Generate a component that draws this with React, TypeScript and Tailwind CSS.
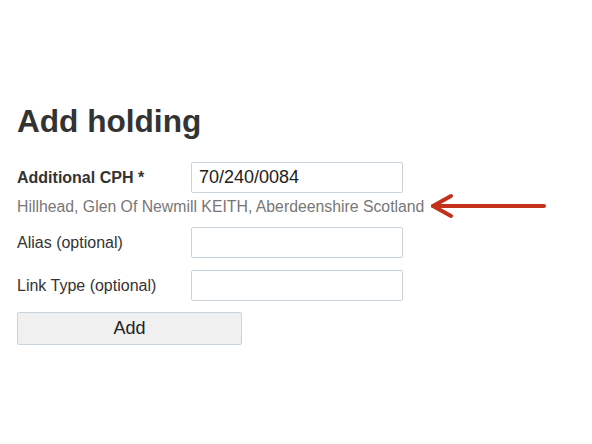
export default function App() {
    return (
        <div className="min-h-[444px] bg-white pl-[17px] pt-[104px] font-['Liberation_Sans',Arial,sans-serif] text-[#333]">
            {/* Heading */}
            <h1 className="text-[31.6px] font-bold leading-[35px]">Add holding</h1>

            {/* CPH row */}
            <div className="mt-[23px] flex items-center">
                <label className="w-[174px] text-[16px] font-bold leading-[24px]">Additional CPH *</label>
                <input
                    readOnly
                    value="70/240/0084"
                    className="h-[31px] w-[212px] rounded-[2px] border border-[#c9d3dc] bg-white px-[7px] text-[18px] text-[#222] outline-none"
                />
            </div>

            {/* Address lookup result + annotation arrow */}
            <div className="relative mt-[2px] h-[24px] text-[15.8px] leading-[24px] text-[#777]">
                Hillhead, Glen Of Newmill KEITH, Aberdeenshire Scotland
                <svg
                    className="absolute left-[412px] top-[-2px]"
                    width="118"
                    height="26"
                    viewBox="0 0 118 26"
                    fill="none"
                    stroke="#c2311c"
                    strokeWidth="4"
                    strokeLinecap="round"
                    strokeLinejoin="round"
                >
                    <path d="M4 13 H115" />
                    <path d="M22 3 L4 13 L22 23" />
                </svg>
            </div>

            {/* Alias row */}
            <div className="mt-[8px] flex items-center">
                <label className="w-[174px] text-[16px] leading-[24px]">Alias (optional)</label>
                <input className="h-[31px] w-[212px] rounded-[2px] border border-[#c9d3dc] bg-white px-[7px] text-[18px] outline-none" />
            </div>

            {/* Link type row */}
            <div className="mt-[12px] flex items-center">
                <label className="w-[174px] text-[16px] leading-[24px]">Link Type (optional)</label>
                <input className="h-[31px] w-[212px] rounded-[2px] border border-[#c9d3dc] bg-white px-[7px] text-[18px] outline-none" />
            </div>

            {/* Submit */}
            <button className="mt-[11px] h-[33px] w-[225px] rounded-[2px] border border-[#c9d3dc] bg-[#f0f0f0] text-[18px] text-[#222]">
                Add
            </button>
        </div>
    );
}
